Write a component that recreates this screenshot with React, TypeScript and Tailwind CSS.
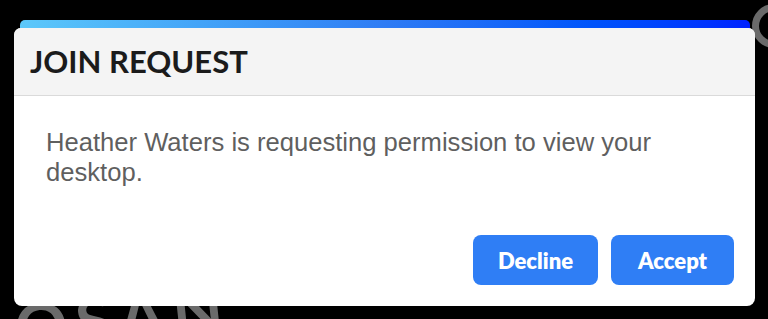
export default function App() {
  return (
    <div className="relative h-[319px] w-[768px] overflow-hidden bg-black">
      {/* watermark behind the dialog */}
      <div className="pointer-events-none absolute left-[14px] top-[284px] -rotate-6 select-none font-['Lato',sans-serif] text-[66px] font-bold leading-none tracking-[8px] text-[#6a6a6a]">
        OSAN
      </div>
      <div className="pointer-events-none absolute left-[752px] top-[4px] h-[44px] w-[44px] rounded-full border-[7px] border-[#6a6a6a]" />

      <div className="relative pt-[20px]">
        <div className="ml-[20px] mr-[18px] h-[8px] rounded-t-[5px] bg-gradient-to-r from-[#5cc8fa] via-[#2f7cf4] to-[#0020ff]" />
        <div className="ml-[14px] w-[741px] overflow-hidden rounded-[8px] rounded-t-[7px] bg-white">
          <div className="flex h-[68px] items-center border-b border-[#dadada] bg-[#f4f4f4] px-[16px]">
            <h2 className="font-['Lato',sans-serif] text-[31px] font-bold leading-none text-[#1b1b1b]">
              JOIN REQUEST
            </h2>
          </div>
          <div className="pt-[31px] pb-[21px] pl-[32px] pr-[21px]">
            <p className="font-['Liberation_Sans',Arial,sans-serif] text-[25.6px] leading-[30px] text-[#5f5f5f]">
              Heather Waters is requesting permission to view your
              <br />
              desktop.
            </p>
            <div className="mt-[48px] flex justify-end gap-[13px]">
              <button className="h-[50px] w-[125px] rounded-[8px] bg-[#2f7ef5] font-['Lato',sans-serif] text-[22px] font-extrabold text-white">
                Decline
              </button>
              <button className="h-[50px] w-[123px] rounded-[8px] bg-[#2f7ef5] font-['Lato',sans-serif] text-[22px] font-extrabold text-white">
                Accept
              </button>
            </div>
          </div>
        </div>
      </div>
    </div>
  );
}
